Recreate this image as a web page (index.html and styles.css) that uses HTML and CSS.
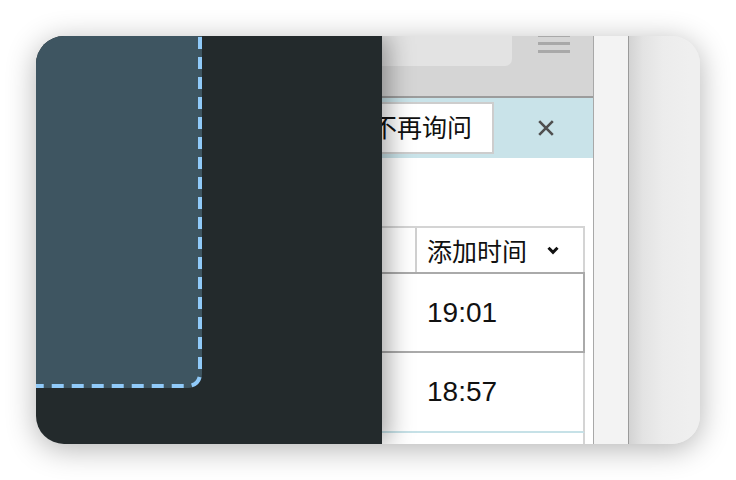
FILE: index.html
```html
<!DOCTYPE html>
<html lang="zh-CN">
<head>
<meta charset="utf-8">
<title>添加时间</title>
<link rel="stylesheet" href="styles.css">
</head>
<body>
<div class="card">
  <div class="dark-panel">
    <svg class="dropzone" width="186" height="372" viewBox="0 0 186 372">
      <path class="dz-fill" d="M0 0 H186 V358 A14 14 0 0 1 172 372 H0 Z"/>
      <path class="dz-stroke" d="M184 0 V358 A12 12 0 0 1 172 370 H0"/>
    </svg>
  </div>
  <div class="browser">
    <div class="toolbar">
      <div class="address"></div>
      <div class="menu"><span></span><span></span><span></span></div>
    </div>
    <div class="notice">
      <div class="btn-never">不再询问</div>
      <svg class="close" width="16" height="16" viewBox="0 0 16 16">
        <path d="M1.2 1.2 L14.8 14.8 M14.8 1.2 L1.2 14.8"/>
      </svg>
    </div>
    <div class="content">
      <div class="table">
        <div class="thead">
          <div class="th th-first"></div>
          <div class="th">添加时间
            <svg class="chev" width="12" height="9" viewBox="0 0 12 9"><path d="M1.5 1.8 L6 6.3 L10.5 1.8"/></svg>
          </div>
        </div>
        <div class="row row-selected">
          <div class="td"></div>
          <div class="td time">19:01</div>
        </div>
        <div class="row row-plain">
          <div class="td"></div>
          <div class="td time">18:57</div>
        </div>
        <div class="row row-next"></div>
      </div>
    </div>
  </div>
  <div class="strip"></div>
  <div class="side"></div>
</div>
</body>
</html>
```
FILE: styles.css
```css
* { box-sizing: border-box; }
html, body { margin: 0; padding: 0; background: #ffffff; }
body {
  padding: 36px;
  font-family: "Liberation Sans", "Noto Sans CJK SC", sans-serif;
  color: #111;
}
.card {
  width: 664px;
  height: 408px;
  border-radius: 28px;
  overflow: hidden;
  display: flex;
  box-shadow: 0 5px 30px rgba(0, 0, 0, 0.3);
  background: #efefef;
}
.dark-panel {
  width: 346px;
  flex: none;
  background: #232a2c;
  position: relative;
  z-index: 2;
  overflow: hidden;
  box-shadow: 6px 0 24px rgba(0, 0, 0, 0.36);
}
.dropzone {
  display: block;
  margin: -20px 0 0 -20px;
}
.dz-fill { fill: #3e5561; }
.dz-stroke {
  fill: none;
  stroke: #90caf9;
  stroke-width: 4;
  stroke-dasharray: 12 8;
  stroke-dashoffset: 19;
}
.browser {
  width: 211px;
  flex: none;
  display: flex;
  flex-direction: column;
  background: #ffffff;
  overflow: hidden;
}
.toolbar {
  height: 62px;
  flex: none;
  background: #d5d5d5;
  border-bottom: 2px solid #9c9c9c;
  display: flex;
  align-items: flex-start;
}
.address {
  width: 130px;
  height: 30px;
  background: #e3e3e3;
  border-bottom-right-radius: 7px;
}
.menu {
  margin-left: 26px;
  margin-top: -2px;
  display: flex;
  flex-direction: column;
  gap: 5px;
}
.menu span {
  display: block;
  width: 32px;
  height: 3px;
  background: #a9a9a9;
}
.notice {
  height: 60px;
  flex: none;
  background: #c9e3e9;
  display: flex;
  align-items: center;
}
.btn-never {
  flex: none;
  margin-left: -32px;
  height: 52px;
  padding: 0 20px;
  border: 2px solid #cdcdcd;
  background: #ffffff;
  font-size: 25px;
  line-height: 48px;
  white-space: nowrap;
  color: #111;
}
.close {
  margin-left: auto;
  margin-right: 39px;
  flex: none;
}
.close path {
  stroke: #505050;
  stroke-width: 2.6;
  fill: none;
}
.content {
  flex: 1;
  padding-top: 68px;
  background: #ffffff;
}
.table {
  margin-left: -40px;
  margin-right: 8px;
}
.thead {
  display: grid;
  grid-template-columns: 75px 1fr;
  height: 46px;
  border-top: 2px solid #d4d4d4;
  border-right: 2px solid #d4d4d4;
}
.th {
  display: flex;
  align-items: center;
  padding-left: 10px;
  font-size: 25px;
  white-space: nowrap;
  color: #111;
}
.th-first { border-right: 2px solid #d0d0d0; }
.chev {
  margin-left: 20px;
  flex: none;
}
.chev path {
  fill: none;
  stroke: #111;
  stroke-width: 3;
}
.row {
  display: grid;
  grid-template-columns: 75px 1fr;
}
.td {
  display: flex;
  align-items: center;
}
.time {
  padding-left: 10px;
  font-size: 28px;
  letter-spacing: 0;
  color: #111;
}
.row-selected {
  height: 81px;
  border: 2px solid #aaaaaa;
  border-left: none;
}
.row-plain {
  height: 80px;
  border-right: 2px solid #d4d4d4;
  border-bottom: 2px solid #c6e1e7;
}
.row-next {
  height: 40px;
  border-right: 2px solid #d4d4d4;
}
.strip {
  width: 36px;
  flex: none;
  background: #f3f3f3;
  border-left: 1px solid #a8a8a8;
  border-right: 1px solid #9a9a9a;
}
.side {
  flex: 1;
  background: linear-gradient(90deg, #d3d3d3 0, #e3e3e3 14px, #ececec 34px, #efefef 60px);
}
```
